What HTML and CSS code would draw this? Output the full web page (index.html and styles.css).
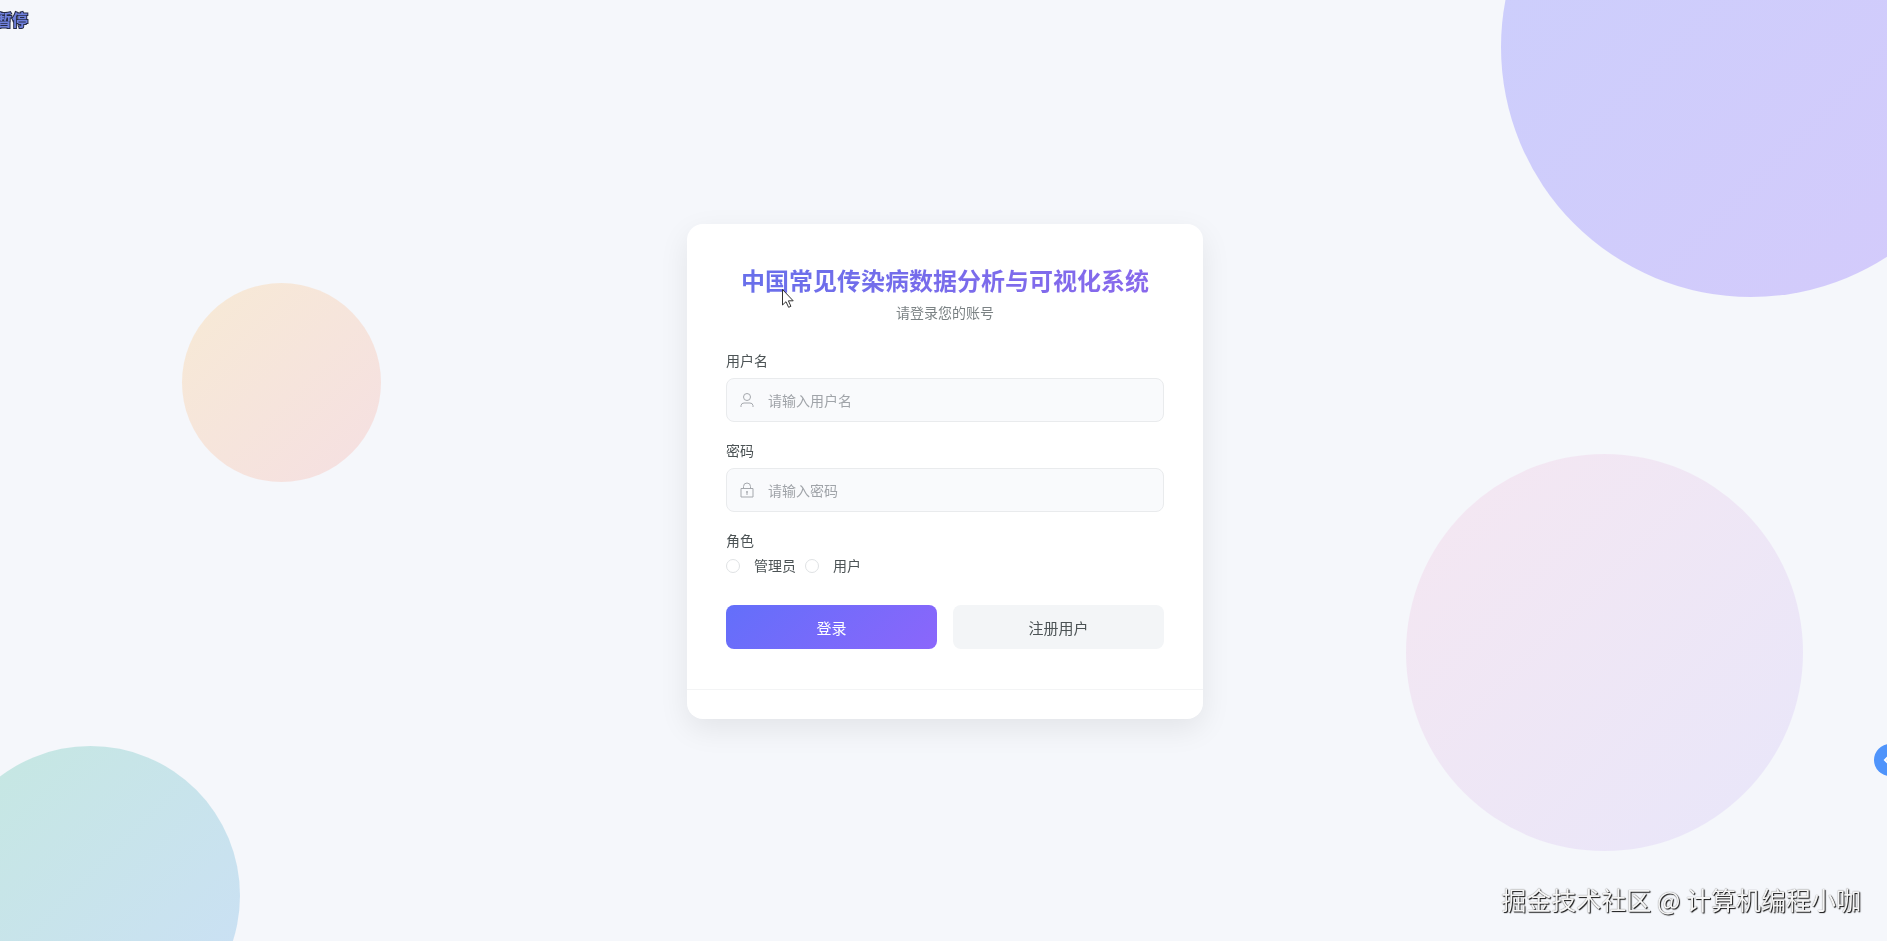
FILE: index.html
```html
<!DOCTYPE html>
<html lang="zh-CN">
<head>
  <meta charset="UTF-8">
  <meta name="viewport" content="width=device-width, initial-scale=1.0">
  <title>中国常见传染病数据分析与可视化系统</title>
  <link rel="stylesheet" href="styles.css">
</head>
<body>
  <!-- Background shapes -->
  <div class="bg-shapes">
    <div class="shape shape-purple"></div>
    <div class="shape shape-orange"></div>
    <div class="shape shape-pink"></div>
    <div class="shape shape-teal"></div>
  </div>

  <main class="login-page">
    <section class="login-card">
      <form class="login-form">
        <header class="login-header">
          <h1>中国常见传染病数据分析与可视化系统</h1>
          <p>请登录您的账号</p>
        </header>

        <div class="form-item">
          <label for="username">用户名</label>
          <div class="input-box">
            <svg viewBox="0 0 16 16" aria-hidden="true">
              <circle cx="8" cy="5" r="3.5"/>
              <path d="M2 15v-1.500a3 3 0 0 1 3-2.500h6a3 3 0 0 1 3 2.500v1.500"/>
            </svg>
            <input type="text" id="username" placeholder="请输入用户名">
          </div>
        </div>

        <div class="form-item">
          <label for="password">密码</label>
          <div class="input-box">
            <svg viewBox="0 0 16 16" aria-hidden="true">
              <path d="M2 6.500h12v8.500H2zM4.500 6.500V4.500a3.500 3.500 0 0 1 7 0v2M8 9v4M7 10h2"/>
            </svg>
            <input type="password" id="password" placeholder="请输入密码">
          </div>
        </div>

        <fieldset class="role-item">
          <legend>角色</legend>
          <div class="role-list">
            <label><input type="radio" name="role" value="admin">管理员</label>
            <label><input type="radio" name="role" value="user">用户</label>
          </div>
        </fieldset>

        <div class="btn-row">
          <button type="submit" class="btn btn-primary">登录</button>
          <button type="button" class="btn btn-default">注册用户</button>
        </div>
      </form>
      <footer class="login-footer"></footer>
    </section>
  </main>

  <span class="pause-tip">暂停</span>
  <button type="button" class="side-btn" aria-label="展开">
    <svg viewBox="0 0 16 16" aria-hidden="true"><path d="M7 4L3 8l4 4"/></svg>
  </button>
  <svg class="cursor" viewBox="0 0 12 19" aria-hidden="true">
    <path d="M.5 .5v15.500l3.500-3.300 2.600 5.600 2.300-1-2.500-5.500h4.800z"/>
  </svg>
  <span class="watermark">掘金技术社区 @ 计算机编程小咖</span>
</body>
</html>
```
FILE: styles.css
```css
* {
  box-sizing: border-box;
  margin: 0;
  padding: 0;
}

body {
  font-family: "Noto Sans CJK SC", sans-serif;
  font-size: 14px;
  line-height: 20px;
  color: #4c5355;
  background: #f5f7fb;
  overflow: hidden;
}

/* Background shapes */
.bg-shapes {
  position: fixed;
  inset: 0;
  overflow: hidden;
  z-index: -1;
}

.shape {
  position: absolute;
  border-radius: 50%;
}

.shape-purple {
  width: 500px;
  height: 500px;
  top: -203px;
  right: -114px;
  background: linear-gradient(135deg, #cbcffc, #d4cafb);
}

.shape-orange {
  width: 199px;
  height: 199px;
  top: 283px;
  left: 182px;
  background: linear-gradient(135deg, #f7ead5, #f5dfe2);
}

.shape-pink {
  width: 397px;
  height: 397px;
  right: 84px;
  bottom: 90px;
  background: linear-gradient(135deg, #f5e7f1, #e8e6fa);
}

.shape-teal {
  width: 299px;
  height: 299px;
  left: -59px;
  bottom: -104px;
  background: linear-gradient(135deg, #c5e8e0, #cbdff7);
}

/* Login card */
.login-page {
  min-height: 100vh;
  padding: 2px 0 0 3px;
  display: flex;
  align-items: center;
  justify-content: center;
}

.login-card {
  width: 100%;
  max-width: 516px;
  background: #fff;
  border-radius: 16px;
  box-shadow: 0 10px 30px rgba(0, 0, 0, 0.08);
}

.login-form {
  padding: 40px 39px;
}

.login-header {
  margin-bottom: 28px;
  text-align: center;
}

.login-header h1 {
  font-size: 24px;
  line-height: 32px;
  margin-bottom: 6px;
  white-space: nowrap;
  background: linear-gradient(135deg, #6670ea, #8a68ec);
  -webkit-background-clip: text;
  background-clip: text;
  color: transparent;
}

.login-header p {
  color: #7b8284;
}

.form-item {
  margin-bottom: 18px;
}

.form-item label {
  display: block;
  margin-bottom: 8px;
}

.input-box {
  display: flex;
  align-items: center;
  gap: 13px;
  height: 44px;
  padding: 0 12px;
  background: #f9fafc;
  border: 1px solid #e9ebed;
  border-radius: 8px;
}

.input-box svg {
  width: 16px;
  height: 16px;
  fill: none;
  stroke: #a5a8ad;
}

.input-box input {
  flex: 1;
  min-width: 0;
  height: 40px;
  border: none;
  outline: none;
  background: transparent;
  font: inherit;
}

.input-box input::placeholder {
  color: #a0a4a9;
}

.role-item {
  border: none;
  margin-bottom: 30px;
}

.role-list {
  display: flex;
  gap: 9px;
  padding-top: 5px;
}

.role-list label {
  display: flex;
  align-items: center;
  gap: 14px;
}

.role-list input {
  appearance: none;
  width: 14px;
  height: 14px;
  margin-top: 2px;
  background: #fff;
  border: 1px solid #dfe2e4;
  border-radius: 50%;
}

.role-list input:checked {
  border: 4px solid #6970ff;
}

.btn-row {
  display: grid;
  grid-template-columns: 1fr 1fr;
  gap: 16px;
}

.btn {
  height: 44px;
  border: none;
  border-radius: 8px;
  font-family: inherit;
  font-size: 15px;
  cursor: pointer;
}

.btn-primary {
  color: #fff;
  background: linear-gradient(135deg, #636ffa, #8b66fb);
}

.btn-default {
  color: #4c5355;
  background: #f3f5f7;
}

.login-footer {
  height: 30px;
  border-top: 1px solid #f3f4f5;
}

/* Floating items */
.pause-tip {
  position: fixed;
  top: 9px;
  left: -4px;
  font-size: 16px;
  font-weight: bold;
  color: #6f80dc;
  -webkit-text-stroke: 2px #262b45;
  paint-order: stroke fill;
}

.side-btn {
  position: fixed;
  top: 744px;
  right: -19px;
  width: 32px;
  height: 32px;
  padding-left: 8px;
  border: none;
  border-radius: 50%;
  background: #4f94fb;
}

.side-btn svg {
  display: block;
  width: 16px;
  height: 16px;
  fill: none;
  stroke: #fff;
  stroke-width: 2;
}

.cursor {
  position: fixed;
  top: 289px;
  left: 782px;
  width: 12px;
  height: 19px;
  fill: #fff;
  stroke: #333;
}

.watermark {
  position: fixed;
  right: 26px;
  bottom: 24px;
  font-size: 25px;
  line-height: 36px;
  color: #f5f5f5;
  text-shadow: 1px 1px 1px #111, 0 0 1px #666;
}
```
